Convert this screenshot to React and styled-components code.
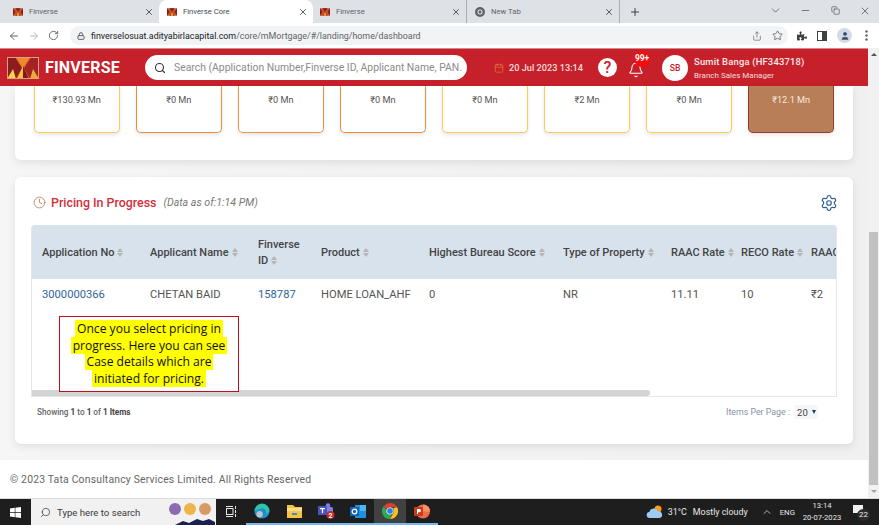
import React from "react";
import styled, { createGlobalStyle } from "styled-components";
import {
  ArrowLeft, ArrowRight, RotateCw, Lock, Star, Search, Calendar, Bell, Clock, Settings,
  ChevronDown, ChevronUp, Minus, X, Plus, Copy, Share, User,
} from "lucide-react";
import { FaPuzzlePiece } from "react-icons/fa";

const Global = createGlobalStyle`
  html, body { margin: 0; padding: 0; height: 525px; overflow: hidden; background: #fff; }
  body { font-family: Roboto, "Liberation Sans", sans-serif; color: #444; }
  * { box-sizing: border-box; }
`;

const Screen = styled.div`
  width: 879px;
  height: 525px;
  display: flex;
  flex-direction: column;
  position: relative;
  overflow: hidden;
`;

/* browser chrome */
const TabStrip = styled.div`
  height: 23px;
  background: #dee1e6;
  display: flex;
  align-items: stretch;
  flex: none;
`;
const Tab = styled.div`
  width: ${(p) => p.$w}px;
  padding-left: ${(p) => p.$pad}px;
  padding-right: 5px;
  display: flex;
  align-items: center;
  gap: 6px;
  font-size: 7.7px;
  color: ${(p) => (p.$active ? "#45494e" : "#5f6368")};
  background: ${(p) => (p.$active ? "#fff" : "transparent")};
  border-radius: ${(p) => (p.$active ? "8px 8px 0 0" : "0")};
  border-right: ${(p) => (p.$sep ? "1px solid #a9adb2" : "none")};
  flex: none;
  & > span { flex: 1; }
  & > svg:last-child { color: #3c4043; }
`;
const NewTab = styled.div`
  width: 30px;
  display: flex;
  align-items: center;
  justify-content: center;
  color: #3c4043;
`;
const WindowControls = styled.div`
  margin-left: auto;
  width: 119px;
  display: grid;
  grid-template-columns: repeat(4, 30px);
  align-items: center;
  justify-items: center;
  padding-bottom: 2px;
  color: #50545a;
`;
const Toolbar = styled.div`
  height: 25px;
  background: #fff;
  display: flex;
  align-items: center;
  flex: none;
  padding-left: 8px;
  color: #5f6368;
`;
const NavIcons = styled.div`
  width: 62px;
  display: flex;
  align-items: center;
  gap: 8px;
`;
const Omnibox = styled.div`
  width: 718px;
  height: 19px;
  background: #f1f3f4;
  border-radius: 10px;
  display: flex;
  align-items: center;
  padding: 0 5px 0 7px;
  gap: 6px;
  font-size: 8.9px;
  color: #5f6368;
  & b { font-weight: 400; color: #202124; }
  & > span { flex: 1; white-space: nowrap; }
`;
const OmniIcons = styled.div`
  display: flex;
  gap: 10px;
  align-items: center;
`;
const ToolIcons = styled.div`
  display: flex;
  align-items: center;
  gap: 10px;
  padding-left: 9px;
  color: #3c4043;
`;
const PanelIcon = styled.i`
  display: block;
  width: 10px;
  height: 10px;
  border: 1.5px solid #3c4043;
  border-right-width: 5px;
`;
const ProfileIcon = styled.div`
  width: 15px;
  height: 15px;
  border-radius: 50%;
  background: #d3dbe6;
  display: flex;
  align-items: center;
  justify-content: center;
  color: #3c4b63;
`;
const MenuDots = styled.svg`
  margin-left: 3px;
`;

/* page with its own scrollbar */
const Viewport = styled.div`
  flex: 1;
  min-height: 0;
  display: flex;
`;
const Page = styled.div`
  width: 868px;
  display: flex;
  flex-direction: column;
  background: #f1f1f1;
`;
const ScrollBar = styled.div`
  width: 11px;
  background: #f1f1f1;
  display: flex;
  flex-direction: column;
  align-items: center;
  & > i {
    display: block;
    width: 9px;
    height: 253px;
    margin-top: 176px;
    background: #c1c1c1;
  }
`;
const ScrollArrow = styled.span`
  width: 0;
  height: 0;
  border-left: 3px solid transparent;
  border-right: 3px solid transparent;
  margin-top: 5px;
  ${(p) => (p.$down ? "border-top: 3px solid #a3a3a3;" : "border-bottom: 3px solid #505050;")}
`;

const AppHeader = styled.header`
  height: 38px;
  background: #c6212a;
  border-top: 1px solid #d9868a;
  display: flex;
  align-items: center;
  flex: none;
  padding-left: 7px;
  color: #fff;
`;
const Brand = styled.div`
  width: 138px;
  display: flex;
  align-items: center;
  gap: 6px;
  font-size: 16px;
  font-weight: 700;
  letter-spacing: 0.2px;
  flex: none;
`;
const BrandLogo = styled.svg`
  flex: none;
`;
const SearchBox = styled.div`
  width: 322px;
  height: 25px;
  background: #fff;
  border-radius: 13px;
  display: flex;
  align-items: center;
  gap: 8px;
  padding: 0 2px 0 9px;
  color: #333;
  font-size: 10.4px;
  white-space: nowrap;
  overflow: hidden;
  flex: none;
  & > span { color: #8b8b8b; }
`;
const DateText = styled.div`
  margin-left: 27px;
  width: 104px;
  display: flex;
  align-items: center;
  gap: 5px;
  font-size: 9.2px;
  font-weight: 500;
  color: #f3dede;
  flex: none;
  & > svg { color: #e9813f; }
`;
const HelpIcon = styled.div`
  width: 19px;
  height: 19px;
  border-radius: 50%;
  background: #fff;
  color: #c6212a;
  font-size: 16px;
  font-weight: 500;
  line-height: 19px;
  text-align: center;
  flex: none;
`;
const BellWrap = styled.div`
  position: relative;
  margin-left: 11px;
  margin-top: 6px;
  width: 16px;
  height: 18px;
  flex: none;
`;
const BellBadge = styled.span`
  position: absolute;
  left: 6px;
  top: -11px;
  width: 16px;
  height: 16px;
  border-radius: 50%;
  background: #f30d0d;
  color: #fff;
  font-size: 8.4px;
  font-weight: 700;
  line-height: 15px;
  text-align: center;
  white-space: nowrap;
`;
const Avatar = styled.div`
  margin-left: 18px;
  width: 26px;
  height: 26px;
  border-radius: 50%;
  background: #fff;
  color: #c6212a;
  font-size: 8.6px;
  font-weight: 500;
  display: flex;
  align-items: center;
  justify-content: center;
  flex: none;
`;
const UserInfo = styled.div`
  margin-left: 6px;
  display: flex;
  flex-direction: column;
  gap: 4px;
  white-space: nowrap;
  & > strong { font-size: 9.4px; font-weight: 500; color: #fbeaea; letter-spacing: 0.2px; }
  & > span { font-size: 8px; color: #f6dcdc; }
`;

const Content = styled.main`
  flex: 1;
  min-height: 0;
  padding: 0 15px;
  display: flex;
  flex-direction: column;
  gap: 17px;
  background: linear-gradient(90deg, #f6f6f6, #f0f0f0);
`;
const Panel = styled.section`
  background: #fff;
  border-radius: ${(p) => (p.$cut ? "0 0 6px 6px" : "6px")};
  box-shadow: 0 3px 10px rgba(0, 0, 0, 0.09);
`;
const CardRow = styled(Panel)`
  height: 74px;
  padding: 0 19px;
  display: flex;
  justify-content: space-between;
  flex: none;
`;
const StatCard = styled.div`
  width: 85.5px;
  height: 47px;
  padding-top: 8px;
  border: 1.5px solid ${(p) => p.$color};
  border-top: none;
  border-radius: 0 0 5px 5px;
  background: ${(p) => p.$fill || "#fff"};
  color: ${(p) => (p.$fill ? "#f6e8de" : "#555")};
  font-size: 9.2px;
  text-align: center;
  box-shadow: 0 2px 4px rgba(0, 0, 0, 0.1);
`;
const TablePanel = styled(Panel)`
  height: 267px;
  padding: 16px 16px 0;
  position: relative;
  flex: none;
`;
const TitleRow = styled.div`
  height: 19px;
  display: flex;
  align-items: center;
  gap: 5px;
  color: #bd8058;
  margin-bottom: 13px;
  padding-left: 2px;
  & > h2 { margin: 0; font-size: 12.4px; font-weight: 500; color: #d22f3b; }
  & > em { margin-left: 2px; font-size: 10.6px; color: #777; }
  & > svg:last-child { margin-left: auto; margin-right: -1px; color: #2c5f93; }
`;
const TableWrap = styled.div`
  width: 806px;
  height: 172px;
  border: 1px solid #e6e6e6;
  border-top: none;
  border-radius: 4px 4px 0 0;
  overflow: hidden;
  position: relative;
`;
const DataTable = styled.table`
  width: 890px;
  margin-left: -1px;
  table-layout: fixed;
  border-collapse: collapse;
  font-size: 11.2px;
  & th {
    height: 54px;
    padding: 1px 0 0 11px;
    background: #d8e2ec;
    color: #444;
    font-weight: 500;
    text-align: left;
    line-height: 16px;
    font-size: 11px;
    white-space: nowrap;
  }
  & td { height: 30px; padding: 0 0 0 11px; color: #555; }
  & td a { color: #2f6596; }
`;
const Col = styled.col`
  width: ${(p) => p.$w}px;
`;
const Sort = styled.span`
  display: inline-flex;
  flex-direction: column;
  gap: 1px;
  margin-left: 3px;
  vertical-align: middle;
  &::before, &::after {
    content: "";
    width: 0;
    height: 0;
    border-left: 3.5px solid transparent;
    border-right: 3.5px solid transparent;
  }
  &::before { border-bottom: 4px solid #b5b5b5; }
  &::after { border-top: 4px solid #b5b5b5; }
`;
const HScroll = styled.div`
  position: absolute;
  left: 0;
  bottom: 0;
  width: 618px;
  height: 6px;
  background: #d4d4d4;
  border-radius: 0 3px 3px 0;
`;
const Note = styled.div`
  position: absolute;
  left: 44px;
  top: 139px;
  width: 180px;
  height: 76px;
  border: 1.5px solid #c00d1e;
  background: #fff;
  padding-top: 4px;
  text-align: center;
  font-family: "Open Sans", sans-serif;
  font-size: 12.1px;
  line-height: 16.7px;
  color: #111;
  & > span { background: #ffff00; box-decoration-break: clone; -webkit-box-decoration-break: clone; padding: 0 2px; }
`;
const PageRow = styled.div`
  display: flex;
  align-items: center;
  justify-content: space-between;
  padding: 8px 19px 0 6px;
`;
const Showing = styled.div`
  font-size: 8.2px;
  font-weight: 500;
  color: #666;
  & > b { font-weight: 700; color: #444; }
`;
const PerPage = styled.div`
  display: flex;
  align-items: center;
  gap: 5px;
  font-size: 8.8px;
  color: #8793a3;
`;
const PerSelect = styled.div`
  width: 23px;
  height: 14px;
  background: #f5f6f7;
  border-radius: 2px;
  display: flex;
  align-items: center;
  justify-content: center;
  gap: 4px;
  color: #444;
  font-size: 9.6px;
  &::after {
    content: "";
    border-left: 2.5px solid transparent;
    border-right: 2.5px solid transparent;
    border-top: 4px solid #17406e;
  }
`;
const Footer = styled.footer`
  height: 38px;
  margin-top: auto;
  flex: none;
  background: #fff;
  padding-left: 10px;
  display: flex;
  align-items: center;
  font-size: 10.4px;
  color: #666;
  letter-spacing: 0.19px;
`;

/* windows taskbar */
const Taskbar = styled.div`
  height: 27px;
  flex: none;
  background: #1e1e1e;
  border-top: 1px solid #dcdcdc;
  display: flex;
  align-items: stretch;
  color: #f0f0f0;
`;
const StartButton = styled.div`
  width: 31px;
  display: flex;
  align-items: center;
  justify-content: center;
`;
const TaskSearch = styled.div`
  width: 185px;
  background: #f1f1f1;
  color: #3b3b3b;
  display: flex;
  align-items: center;
  gap: 6px;
  padding-left: 9px;
  font-size: 9.6px;
  & > span { flex: 1; }
`;
const FlippedSearch = styled(Search)`
  transform: scaleX(-1);
`;
const SearchArt = styled.svg`
  margin-right: 1px;
  align-self: flex-end;
`;
const TaskApps = styled.div`
  display: flex;
`;
const TaskApp = styled.div`
  width: ${(p) => p.$w || 32}px;
  display: flex;
  align-items: center;
  justify-content: center;
  background: ${(p) => (p.$active ? "#414141" : "transparent")};
  border-bottom: ${(p) => (p.$open ? "2px solid #76b9ed" : "2px solid transparent")};
`;
const Tray = styled.div`
  margin-left: auto;
  display: flex;
  align-items: center;
  font-size: 8.9px;
  color: #e6e6e6;
  padding-right: 9px;
`;
const TrayText = styled.span`
  margin-left: ${(p) => p.$gap}px;
  font-size: ${(p) => p.$size || 8.9}px;
`;
const TrayCaret = styled(ChevronUp)`
  margin-left: 13px;
`;
const TrayClock = styled.div`
  width: 46px;
  margin-left: 4px;
  text-align: center;
  font-size: 7.6px;
  line-height: 12px;
`;
const NotifyBadge = styled.div`
  position: relative;
  margin-left: 7px;
  width: 18px;
  height: 18px;
  &::before {
    content: "";
    position: absolute;
    left: 1px;
    top: 2px;
    width: 10px;
    height: 8px;
    background: #f0f0f0;
  }
  & > span {
    position: absolute;
    right: 0;
    bottom: 0;
    width: 13px;
    height: 12px;
    border-radius: 50%;
    background: #2b2b2b;
    font-size: 7.8px;
    line-height: 12px;
    text-align: center;
    color: #eee;
  }
`;
const TabIcon = styled.svg`
  flex: none;
`;

const Favicon = () => (
  <TabIcon width="10" height="8" viewBox="0 0 32 24">
    <rect width="32" height="24" fill="#c4572a" />
    <path d="M0 0 8 12 0 24ZM32 0 24 12 32 24ZM8 0 16 12 24 0ZM8 24 16 12 24 24Z" fill="#8d1a1d" />
    <path d="M16 12 11 24H21Z" fill="#f3b62f" />
  </TabIcon>
);

const Logo = () => (
  <BrandLogo width="32" height="22" viewBox="0 0 32 22">
    <rect width="32" height="22" fill="#e2772f" />
    <path d="M0 0H8L15 11 9 22H0Z" fill="#8c1c20" />
    <path d="M32 0H24L17 11 23 22H32Z" fill="#a32422" />
    <path d="M9 0H23L16 10Z" fill="#ee8a2c" />
    <path d="M16 9 10 22H16Z" fill="#f4c23c" />
    <path d="M16 9 22 22H16Z" fill="#7a1a1e" />
    <path d="M0 22 6 12 9 22Z" fill="#f6d34a" />
    <path d="M32 22 26 12 23 22Z" fill="#f0a838" />
    <rect x="0.5" y="0.5" width="31" height="21" fill="none" stroke="#d9a184" />
  </BrandLogo>
);

const ChromeIcon = ({ size = 10 }) => (
  <TabIcon width={size} height={size} viewBox="0 0 20 20">
    <circle cx="10" cy="10" r="10" fill="#5f6368" />
    <circle cx="10" cy="10" r="5" fill="#fff" />
    <circle cx="10" cy="10" r="3.4" fill="#5f6368" />
  </TabIcon>
);

const ChromeColor = () => (
  <svg width="16" height="16" viewBox="0 0 20 20">
    <path d="M10 0a10 10 0 0 1 8.7 5H10a5 5 0 0 0-4.5 2.9L2.3 3.6A10 10 0 0 1 10 0Z" fill="#e33b2e" />
    <path d="M18.7 5A10 10 0 0 1 10 20l4.3-7.5A5 5 0 0 0 14 6.7Z" fill="#f9c21a" />
    <path d="M10 20A10 10 0 0 1 2.3 3.6l4 7A5 5 0 0 0 12 14.6Z" fill="#2da94f" />
    <circle cx="10" cy="10" r="4.2" fill="#2f7de1" stroke="#fff" />
  </svg>
);

const WinLogo = () => (
  <svg width="11" height="11" viewBox="0 0 11 11">
    <path d="M0 1.5 4.8.8v4.3H0ZM5.4.7 11 0v5.1H5.4ZM0 5.8h4.8v4.4L0 9.5ZM5.4 5.8H11V11l-5.6-.8Z" fill="#fff" />
  </svg>
);

const EdgeIcon = () => (
  <svg width="16" height="16" viewBox="0 0 20 20">
    <circle cx="10" cy="10" r="9.5" fill="#1a8fd1" />
    <path d="M1 10a9 9 0 0 1 18 0c0 2-2 3-4 3 1-4-2-7-6-6-4 .5-6 3-8 3Z" fill="#35c1a0" />
    <circle cx="7" cy="14" r="4" fill="#b9c4cc" />
  </svg>
);
const FolderIcon = () => (
  <svg width="15" height="13" viewBox="0 0 15 13">
    <path d="M0 0h6l2 2h7v11H0Z" fill="#f5c445" />
    <rect y="3" width="15" height="3" fill="#fbe08a" />
    <rect x="5" y="8" width="5" height="2" fill="#3a8fd0" />
  </svg>
);
const TeamsIcon = () => (
  <svg width="17" height="16" viewBox="0 0 17 16">
    <circle cx="10" cy="2.5" r="2.2" fill="#7b83eb" />
    <rect x="6" y="4" width="9" height="8" rx="1.5" fill="#7b83eb" />
    <rect y="3" width="9" height="9" rx="1" fill="#4b53bc" />
    <path d="M2 5h5v1.2H5.1V10H3.9V6.2H2Z" fill="#fff" />
    <circle cx="12.5" cy="12" r="4" fill="#c4262e" />
    <text x="12.5" y="14.6" fontSize="7" fontWeight="700" textAnchor="middle" fill="#fff">2</text>
  </svg>
);
const OutlookIcon = () => (
  <svg width="16" height="15" viewBox="0 0 16 15">
    <rect x="5" y="1" width="11" height="13" fill="#1f8fe0" />
    <rect x="10" y="1" width="6" height="6" fill="#4fb5f0" />
    <rect y="3" width="9" height="9" fill="#0f62b5" />
    <circle cx="4.5" cy="7.5" r="2.3" fill="none" stroke="#fff" strokeWidth="1.3" />
  </svg>
);
const PptIcon = () => (
  <svg width="16" height="15" viewBox="0 0 16 15">
    <circle cx="9" cy="7.5" r="7" fill="#ed6c47" />
    <path d="M9 .5a7 7 0 0 1 7 7H9Z" fill="#ff8f6b" />
    <rect y="3" width="9" height="9" rx="1" fill="#c43e1c" />
    <path d="M3 5h2.4a1.6 1.6 0 0 1 0 3.2H4V10H3Z" fill="#fff" />
  </svg>
);
const CloudIcon = () => (
  <svg width="17" height="14" viewBox="0 0 17 14">
    <circle cx="12" cy="4" r="3.5" fill="#f49b20" />
    <path d="M4 13a3 3 0 0 1-.6-6A4.5 4.5 0 0 1 12 6.5a3.3 3.3 0 0 1 1.5 6.5Z" fill="#9ccbf5" />
  </svg>
);
const TaskViewIcon = () => (
  <svg width="11" height="11" viewBox="0 0 11 11" fill="none" stroke="#e8e8e8">
    <rect x="0.5" y="2.5" width="6.5" height="6" />
    <path d="M0 .5h7M0 10.5h7M9.5 0v3M9.5 4v3M9.5 8v3" />
  </svg>
);

const tabs = [
  { title: "Finverse", w: 159, pad: 13 },
  { title: "Finverse Core", w: 154, pad: 8, active: true },
  { title: "Finverse", w: 154, pad: 7, sep: true },
  { title: "New Tab", w: 153, pad: 8, chrome: true, sep: true },
];

const cards = [
  { value: "₹130.93 Mn", color: "#fdc95a" },
  { value: "₹0 Mn", color: "#f08a3c" },
  { value: "₹0 Mn", color: "#f0924a" },
  { value: "₹0 Mn", color: "#f08a3c" },
  { value: "₹0 Mn", color: "#fdc95a" },
  { value: "₹2 Mn", color: "#fdc95a" },
  { value: "₹0 Mn", color: "#fdc95a" },
  { value: "₹12.1 Mn", color: "#9a3a30", fill: "#b77e57" },
];

const columns = [
  { label: "Application No", width: 108 },
  { label: "Applicant Name", width: 108 },
  { label: <>Finverse<br />ID</>, width: 63 },
  { label: "Product", width: 108 },
  { label: "Highest Bureau Score", width: 134 },
  { label: "Type of Property", width: 108 },
  { label: "RAAC Rate", width: 70 },
  { label: "RECO Rate", width: 70 },
  { label: "RAAC Amount", width: 121 },
];

const App = () => {
  return (
    <Screen>
      <Global />
      <TabStrip>
        {tabs.map((t) => (
          <Tab key={t.title + t.w} $w={t.w} $pad={t.pad} $active={t.active} $sep={t.sep}>
            {t.chrome ? <ChromeIcon /> : <Favicon />}
            <span>{t.title}</span>
            <X size={10} strokeWidth={2} />
          </Tab>
        ))}
        <NewTab><Plus size={12} strokeWidth={2} /></NewTab>
        <WindowControls>
          <ChevronDown size={13} strokeWidth={1.4} />
          <Minus size={11} strokeWidth={1.6} />
          <Copy size={9} strokeWidth={1.8} />
          <X size={12} strokeWidth={1.5} />
        </WindowControls>
      </TabStrip>

      <Toolbar>
        <NavIcons>
          <ArrowLeft size={12} strokeWidth={2} />
          <ArrowRight size={12} strokeWidth={2} color="#b4b7bb" />
          <RotateCw size={11} strokeWidth={2} />
        </NavIcons>
        <Omnibox>
          <Lock size={8} strokeWidth={3} />
          <span><b>finverselosuat.adityabirlacapital.com</b>/core/mMortgage/#/landing/home/dashboard</span>
          <OmniIcons>
            <Share size={10} strokeWidth={1.6} />
            <Star size={11} strokeWidth={1.8} />
          </OmniIcons>
        </Omnibox>
        <ToolIcons>
          <FaPuzzlePiece size={10} />
          <PanelIcon />
          <ProfileIcon><User size={10} fill="#3c4b63" strokeWidth={1} /></ProfileIcon>
          <MenuDots width="3" height="11" viewBox="0 0 3 11" fill="#5f6368">
            <circle cx="1.5" cy="1.5" r="1.2" /><circle cx="1.5" cy="5.5" r="1.2" /><circle cx="1.5" cy="9.5" r="1.2" />
          </MenuDots>
        </ToolIcons>
      </Toolbar>

      <Viewport>
        <Page>
          <AppHeader>
            <Brand><Logo />FINVERSE</Brand>
            <SearchBox>
              <Search size={12} strokeWidth={2.2} />
              <span>Search (Application Number,Finverse ID, Applicant Name, PAN.</span>
            </SearchBox>
            <DateText><Calendar size={10} strokeWidth={1.5} />20 Jul 2023 13:14</DateText>
            <HelpIcon>?</HelpIcon>
            <BellWrap>
              <Bell size={16} strokeWidth={1.6} />
              <BellBadge>99+</BellBadge>
            </BellWrap>
            <Avatar>SB</Avatar>
            <UserInfo>
              <strong>Sumit Banga (HF343718)</strong>
              <span>Branch Sales Manager</span>
            </UserInfo>
          </AppHeader>

          <Content>
            <CardRow $cut as="section">
              {cards.map((c, i) => (
                <StatCard key={i} $color={c.color} $fill={c.fill}>{c.value}</StatCard>
              ))}
            </CardRow>

            <TablePanel>
              <TitleRow>
                <Clock size={13} strokeWidth={1.6} />
                <h2>Pricing In Progress</h2>
                <em>(Data as of:1:14 PM)</em>
                <Settings size={18} strokeWidth={1.6} />
              </TitleRow>
              <TableWrap>
                <DataTable>
                  <colgroup>
                    {columns.map((c, i) => <Col key={i} $w={c.width} />)}
                  </colgroup>
                  <thead>
                    <tr>
                      {columns.map((c, i) => (
                        <th key={i}>{c.label}<Sort /></th>
                      ))}
                    </tr>
                  </thead>
                  <tbody>
                    <tr>
                      <td><a>3000000366</a></td>
                      <td>CHETAN BAID</td>
                      <td><a>158787</a></td>
                      <td>HOME LOAN_AHF</td>
                      <td>0</td>
                      <td>NR</td>
                      <td>11.11</td>
                      <td>10</td>
                      <td>₹2</td>
                    </tr>
                  </tbody>
                </DataTable>
                <HScroll />
              </TableWrap>
              <Note>
                <span>Once you select pricing in<br />progress. Here you can see<br />Case details which are<br />initiated for pricing.</span>
              </Note>
              <PageRow>
                <Showing>Showing <b>1</b> to <b>1</b> of <b>1</b> <b>Items</b></Showing>
                <PerPage>Items Per Page : <PerSelect>20</PerSelect></PerPage>
              </PageRow>
            </TablePanel>
          </Content>
          <Footer>© 2023 Tata Consultancy Services Limited. All Rights Reserved</Footer>
        </Page>
        <ScrollBar>
          <ScrollArrow />
          <i />
          <ScrollArrow $down />
        </ScrollBar>
      </Viewport>

      <Taskbar>
        <StartButton><WinLogo /></StartButton>
        <TaskSearch>
          <FlippedSearch size={11} strokeWidth={1.6} />
          <span>Type here to search</span>
          <SearchArt width="46" height="26" viewBox="0 0 46 26">
            <circle cx="6" cy="10" r="6" fill="#8d6bb0" />
            <circle cx="21" cy="10" r="6" fill="#eeb44a" />
            <circle cx="36" cy="10" r="6" fill="#d79a63" />
            <path d="M6 26 14 22 20 24 28 20 34 22 40 20 46 23V26Z" fill="#1c2050" />
          </SearchArt>
        </TaskSearch>
        <TaskApps>
          <TaskApp $w={30}><TaskViewIcon /></TaskApp>
          <TaskApp $open><EdgeIcon /></TaskApp>
          <TaskApp $open><FolderIcon /></TaskApp>
          <TaskApp $open><TeamsIcon /></TaskApp>
          <TaskApp $open><OutlookIcon /></TaskApp>
          <TaskApp $open $active><ChromeColor /></TaskApp>
          <TaskApp $open><PptIcon /></TaskApp>
        </TaskApps>
        <Tray>
          <CloudIcon />
          <TrayText $gap={5}>31°C</TrayText>
          <TrayText $gap={6}>Mostly cloudy</TrayText>
          <TrayCaret size={12} strokeWidth={1.5} />
          <TrayText $gap={7} $size={7.8}>ENG</TrayText>
          <TrayClock>13:14<br />20-07-2023</TrayClock>
          <NotifyBadge><span>22</span></NotifyBadge>
        </Tray>
      </Taskbar>
    </Screen>
  );
};

export default App;
